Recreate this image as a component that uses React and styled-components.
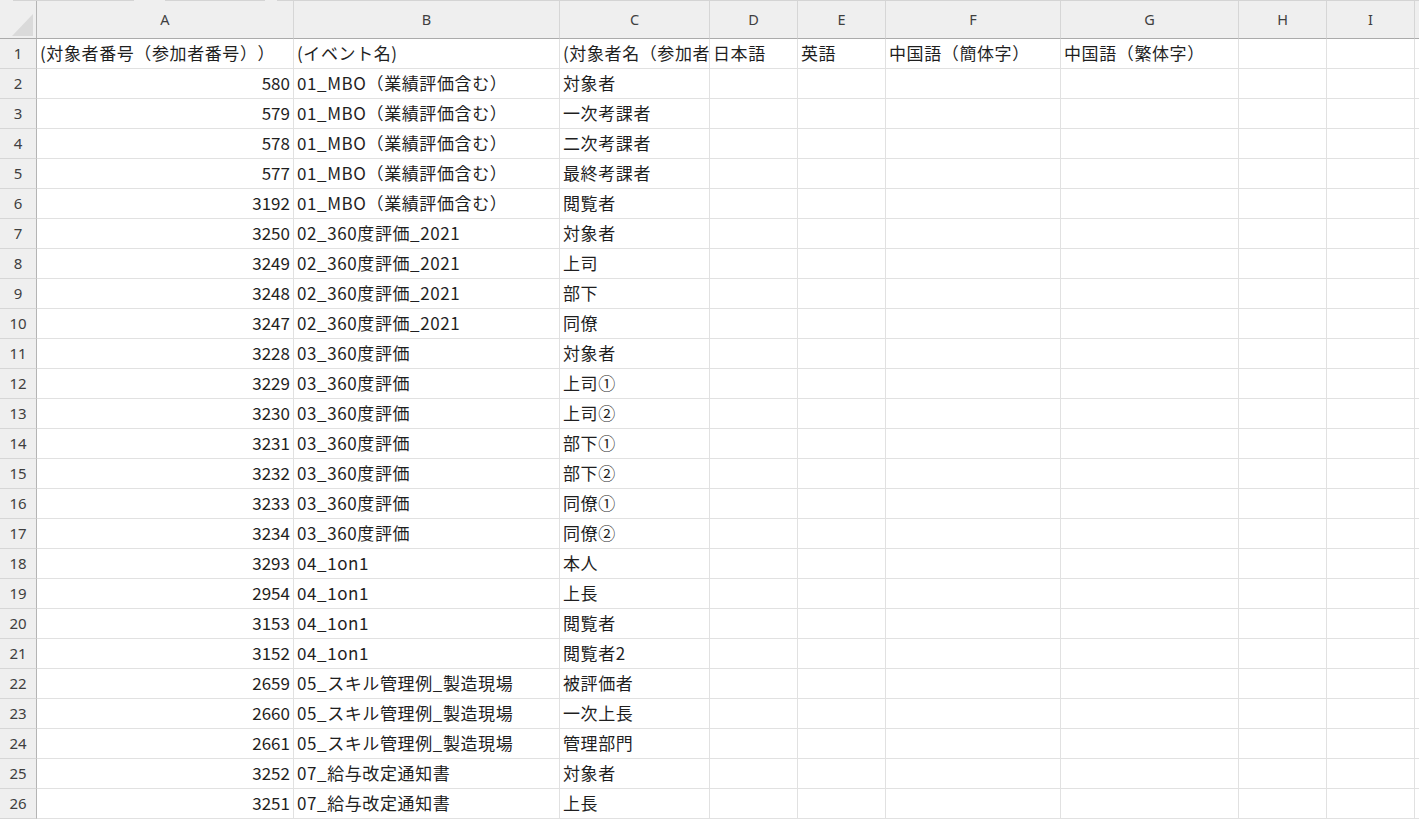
import React from 'react';
import styled, { createGlobalStyle } from 'styled-components';

const GlobalStyle = createGlobalStyle`
  html, body {
    margin: 0;
    padding: 0;
    background: #ffffff;
    overflow: hidden;
  }
  body {
    font-family: "Noto Sans CJK JP", "Noto Sans", sans-serif;
  }
`;

// column widths incl. the 1px right border
const COLS = [37, 257, 266, 150, 88, 88, 175, 178, 88, 88, 88];
const LETTERS = ['A', 'B', 'C', 'D', 'E', 'F', 'G', 'H', 'I', 'J'];

const rows = [
  ['580', '01_MBO（業績評価含む）', '対象者'],
  ['579', '01_MBO（業績評価含む）', '一次考課者'],
  ['578', '01_MBO（業績評価含む）', '二次考課者'],
  ['577', '01_MBO（業績評価含む）', '最終考課者'],
  ['3192', '01_MBO（業績評価含む）', '閲覧者'],
  ['3250', '02_360度評価_2021', '対象者'],
  ['3249', '02_360度評価_2021', '上司'],
  ['3248', '02_360度評価_2021', '部下'],
  ['3247', '02_360度評価_2021', '同僚'],
  ['3228', '03_360度評価', '対象者'],
  ['3229', '03_360度評価', '上司①'],
  ['3230', '03_360度評価', '上司②'],
  ['3231', '03_360度評価', '部下①'],
  ['3232', '03_360度評価', '部下②'],
  ['3233', '03_360度評価', '同僚①'],
  ['3234', '03_360度評価', '同僚②'],
  ['3293', '04_1on1', '本人'],
  ['2954', '04_1on1', '上長'],
  ['3153', '04_1on1', '閲覧者'],
  ['3152', '04_1on1', '閲覧者2'],
  ['2659', '05_スキル管理例_製造現場', '被評価者'],
  ['2660', '05_スキル管理例_製造現場', '一次上長'],
  ['2661', '05_スキル管理例_製造現場', '管理部門'],
  ['3252', '07_給与改定通知書', '対象者'],
  ['3251', '07_給与改定通知書', '上長'],
];

const headerRow = [
  '(対象者番号（参加者番号））',
  '(イベント名)',
  '(対象者名（参加者名））',
  '日本語',
  '英語',
  '中国語（簡体字）',
  '中国語（繁体字）',
  '',
  '',
  '',
];

const Sheet = styled.div`
  width: 1419px;
  height: 820px;
  overflow: hidden;
  background: #ffffff;
`;

const TopStrip = styled.div`
  display: flex;
  height: 1px;
  background: #efefef;
`;

const StripSeg = styled.div`
  height: 1px;
  margin-left: ${(p) => p.$gap}px;
  width: ${(p) => (p.$w ? `${p.$w}px` : 'auto')};
  flex: ${(p) => (p.$w ? 'none' : '1')};
  background: #d4d4d4;
`;

const Grid = styled.div`
  display: grid;
  grid-template-columns: ${COLS.map((w) => `${w}px`).join(' ')};
  grid-auto-rows: 30px;
  grid-template-rows: 38px;
`;

const Corner = styled.div`
  position: relative;
  background: #efefef;
  border-right: 1px solid #b4b4b4;
  border-bottom: 1px solid #ababab;
`;

const CornerTriangle = styled.div`
  position: absolute;
  right: 3px;
  bottom: 2px;
  width: 0;
  height: 0;
  border-left: 21px solid transparent;
  border-bottom: 22px solid #dadada;
`;

const ColHead = styled.div`
  display: flex;
  align-items: center;
  justify-content: center;
  padding-bottom: 1px;
  background: #efefef;
  border-right: 1px solid #d6d6d6;
  border-bottom: 1px solid #ababab;
  font-family: "Noto Sans", "Liberation Sans", sans-serif;
  font-size: 14.5px;
  color: #3f3f3f;
`;

const RowHead = styled.div`
  display: flex;
  align-items: center;
  justify-content: center;
  padding-bottom: 1px;
  background: #efefef;
  border-right: 1px solid #b4b4b4;
  border-bottom: 1px solid #d6d6d6;
  font-family: "Noto Sans", "Liberation Sans", sans-serif;
  font-size: 15px;
  color: #3f3f3f;
`;

const Cell = styled.div`
  display: flex;
  align-items: center;
  justify-content: ${(p) => (p.$num ? 'flex-end' : 'flex-start')};
  padding: 0 ${(p) => (p.$num ? '3px' : '0')} 3px ${(p) => (p.$num ? '0' : '3px')};
  box-sizing: border-box;
  border-right: 1px solid #e1e1e1;
  border-bottom: 1px solid #e1e1e1;
  overflow: hidden;
  white-space: nowrap;
  font-family: "Noto Sans CJK JP", "Noto Sans", sans-serif;
  font-size: 17px;
  letter-spacing: ${(p) => (p.$num ? '0' : '0.6px')};
  text-spacing-trim: space-all;
  font-feature-settings: "palt" 0;
  color: #1f1f1f;
  min-width: 0;
`;

export default function App() {
  return (
    <Sheet>
      <GlobalStyle />
      <TopStrip>
        <StripSeg $gap={13} $w={121} />
        <StripSeg $gap={31} $w={100} />
        <StripSeg $gap={12} />
      </TopStrip>
      <Grid>
        <Corner>
          <CornerTriangle />
        </Corner>
        {LETTERS.map((l) => (
          <ColHead key={l}>{l}</ColHead>
        ))}

        <RowHead>1</RowHead>
        {headerRow.map((t, i) => (
          <Cell key={i}>{t}</Cell>
        ))}

        {rows.map((r, idx) => (
          <React.Fragment key={idx}>
            <RowHead>{idx + 2}</RowHead>
            <Cell $num>{r[0]}</Cell>
            <Cell>{r[1]}</Cell>
            <Cell>{r[2]}</Cell>
            {Array.from({ length: 7 }).map((_, j) => (
              <Cell key={j} />
            ))}
          </React.Fragment>
        ))}
      </Grid>
    </Sheet>
  );
}
